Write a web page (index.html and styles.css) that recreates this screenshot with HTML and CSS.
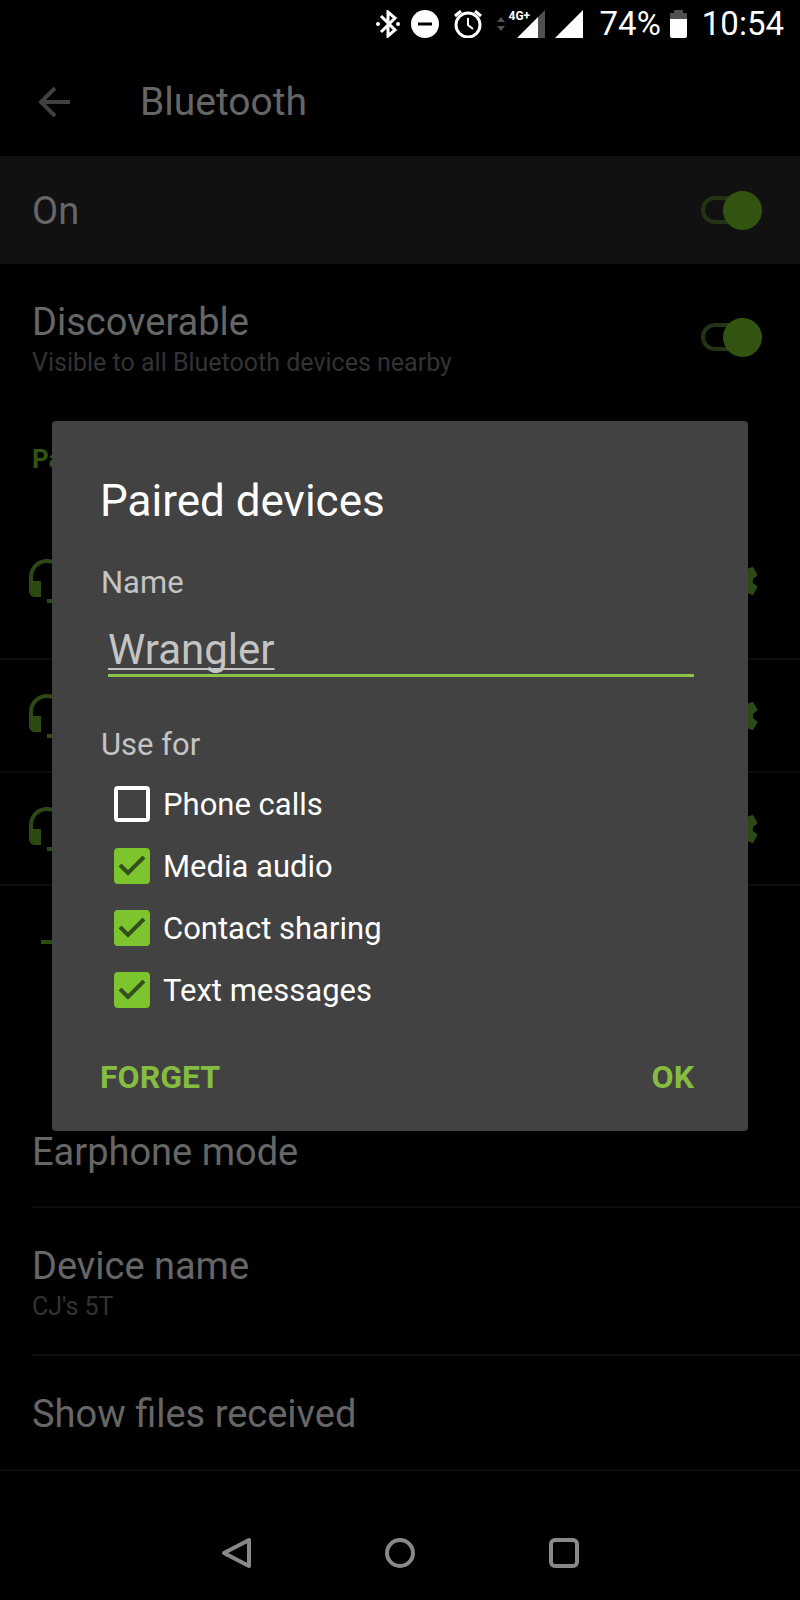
FILE: index.html
```html
<!DOCTYPE html>
<html lang="en">
<head>
    <meta charset="UTF-8">
    <meta name="viewport" content="width=device-width, initial-scale=1.0">
    <title>Bluetooth</title>
    <link rel="stylesheet" href="styles.css">
</head>
<body>
    <svg class="sprite" aria-hidden="true">
        <symbol id="headset" viewBox="0 0 24 24">
            <path d="M12 1c-4.97 0-9 4.03-9 9v7c0 1.66 1.34 3 3 3h3v-8H5v-2c0-3.87 3.13-7 7-7s7 3.13 7 7v2h-4v8h4v1h-7v2h6c1.66 0 3-1.34 3-3V10c0-4.97-4.03-9-9-9z"/>
        </symbol>
        <symbol id="gear" viewBox="0 0 24 24">
            <path d="M19.43 12.98c.04-.32.07-.64.07-.98s-.03-.66-.07-.98l2.11-1.65c.19-.15.24-.42.12-.64l-2-3.46c-.12-.22-.39-.3-.61-.22l-2.49 1c-.52-.4-1.08-.73-1.69-.98l-.38-2.65C14.46 2.18 14.25 2 14 2h-4c-.25 0-.46.18-.49.42l-.38 2.65c-.61.25-1.17.59-1.69.98l-2.49-1c-.23-.09-.49 0-.61.22l-2 3.46c-.13.22-.07.49.12.64l2.11 1.65c-.04.32-.07.65-.07.98s.03.66.07.98l-2.11 1.65c-.19.15-.24.42-.12.64l2 3.46c.12.22.39.3.61.22l2.49-1c.52.4 1.08.73 1.69.98l.38 2.65c.03.24.24.42.49.42h4c.25 0 .46-.18.49-.42l.38-2.65c.61-.25 1.17-.59 1.69-.98l2.49 1c.23.09.49 0 .61-.22l2-3.46c.12-.22.07-.49-.12-.64l-2.11-1.65zM12 15.5c-1.93 0-3.5-1.57-3.5-3.5s1.57-3.5 3.5-3.5 3.5 1.57 3.5 3.5-1.57 3.5-3.5 3.5z"/>
        </symbol>
    </svg>

    <div class="status-bar">
        <svg class="status-icon bluetooth" width="24" height="28" viewBox="0 0 24 28">
            <path d="M5 6l14 14-7 6V2l7 6L5 22" fill="none" stroke="#fff" stroke-width="3"/>
            <circle cx="2" cy="14" r="2"/>
            <circle cx="22" cy="14" r="2"/>
        </svg>
        <svg class="status-icon" width="28" height="28" viewBox="0 0 28 28">
            <circle cx="14" cy="14" r="14"/>
            <path d="M7 14h14" stroke="#000" stroke-width="3"/>
        </svg>
        <svg class="status-icon" width="28" height="28" viewBox="0 0 28 28">
            <g fill="none" stroke="#fff" stroke-width="3">
                <circle cx="14" cy="15" r="12"/>
                <path d="M14 8v7l5 4" stroke-width="2"/>
                <path d="M1 6l6-5M27 6l-6-5"/>
            </g>
        </svg>
        <div class="mobile">
            <svg class="data-arrows" width="8" height="14" viewBox="0 0 8 14">
                <path d="M0 5l4-5 4 5zM0 9l4 5 4-5z"/>
            </svg>
            <span class="network">4G+</span>
            <svg class="status-icon" width="28" height="28" viewBox="0 0 28 28">
                <path d="M28 0v28h-7V7z" fill="#505050"/>
                <path d="M21 7v21H0z"/>
            </svg>
        </div>
        <svg class="status-icon signal" width="28" height="28" viewBox="0 0 28 28">
            <path d="M28 0v28H0z"/>
        </svg>
        <span class="battery-level">74%</span>
        <svg class="status-icon battery" width="17" height="28" viewBox="0 0 17 28">
            <path d="M0 9V3h4V0h9v3h4v6z" fill="#505050"/>
            <path d="M0 9h17v17a2 2 0 0 1-2 2H2a2 2 0 0 1-2-2z"/>
        </svg>
        <span class="clock">10:54</span>
    </div>

    <header class="app-bar">
        <button class="back" aria-label="Back">
            <svg width="32" height="30" viewBox="0 0 32 30">
                <path d="M32 15H3M17 1L3 15l14 14" fill="none" stroke="currentColor" stroke-width="4"/>
            </svg>
        </button>
        <h1>Bluetooth</h1>
    </header>

    <main>
        <label class="row switch-bar">
            <span class="row-title">On</span>
            <input type="checkbox" class="switch" checked>
        </label>
        <label class="row two-line plain">
            <span>
                <span class="row-title">Discoverable</span>
                <span class="row-summary">Visible to all Bluetooth devices nearby</span>
            </span>
            <input type="checkbox" class="switch" checked>
        </label>

        <h2>Paired devices</h2>
        <div class="device first">
            <svg class="device-icon"><use href="#headset"/></svg>
            <svg class="device-icon"><use href="#gear"/></svg>
        </div>
        <div class="device">
            <svg class="device-icon"><use href="#headset"/></svg>
            <svg class="device-icon"><use href="#gear"/></svg>
        </div>
        <div class="device">
            <svg class="device-icon"><use href="#headset"/></svg>
            <svg class="device-icon"><use href="#gear"/></svg>
        </div>
        <div class="pair-new">
            <svg class="device-icon" viewBox="0 0 24 24"><path d="M19 13h-6v6h-2v-6H5v-2h6V5h2v6h6z"/></svg>
        </div>

        <div class="row">
            <span class="row-title">Earphone mode</span>
        </div>
        <div class="row two-line">
            <span>
                <span class="row-title">Device name</span>
                <span class="row-summary">CJ's 5T</span>
            </span>
        </div>
        <div class="row last">
            <span class="row-title">Show files received</span>
        </div>
    </main>

    <nav class="nav-bar">
        <button aria-label="Back">
            <svg width="32" height="32" viewBox="0 0 32 32"><path d="M29 3v26L4 16z"/></svg>
        </button>
        <button aria-label="Home">
            <svg width="32" height="32" viewBox="0 0 32 32"><circle cx="16" cy="16" r="13"/></svg>
        </button>
        <button aria-label="Recent apps">
            <svg width="32" height="32" viewBox="0 0 32 32"><rect x="3" y="3" width="26" height="26" rx="4"/></svg>
        </button>
    </nav>

    <div class="overlay">
        <form class="dialog" role="dialog" aria-labelledby="dialogTitle">
            <h2 id="dialogTitle" class="dialog-title">Paired devices</h2>
            <label for="deviceName" class="field-label">Name</label>
            <input type="text" id="deviceName" class="name-input" value="Wrangler" spellcheck="false">
            <fieldset>
                <legend class="field-label">Use for</legend>
                <div class="options">
                    <label class="option"><input type="checkbox">Phone calls</label>
                    <label class="option"><input type="checkbox" checked>Media audio</label>
                    <label class="option"><input type="checkbox" checked>Contact sharing</label>
                    <label class="option"><input type="checkbox" checked>Text messages</label>
                </div>
            </fieldset>
            <div class="actions">
                <button type="button">FORGET</button>
                <button type="button">OK</button>
            </div>
        </form>
    </div>
</body>
</html>
```
FILE: styles.css
```css
*,
*::before,
*::after {
    margin: 0;
    padding: 0;
    box-sizing: border-box;
    font-family: Roboto, "Noto Sans", sans-serif;
}

body {
    background: #000;
    color: #666;
    display: flex;
    flex-direction: column;
    min-height: 100vh;
}

svg {
    display: block;
    flex-shrink: 0;
}

button {
    background: none;
    border: none;
    cursor: pointer;
}

.sprite {
    position: absolute;
    width: 0;
    height: 0;
}

/* Status bar */
.status-bar {
    display: flex;
    align-items: center;
    justify-content: flex-end;
    gap: 15px;
    height: 48px;
    padding-right: 16px;
    color: #fff;
    font-size: 33px;
    line-height: 48px;
}

.status-icon {
    fill: #fff;
}

.bluetooth {
    margin-right: -4px;
}

.mobile {
    display: flex;
    align-items: center;
}

.data-arrows {
    fill: #505050;
    margin-right: 4px;
}

/* The label runs over the empty corner of the signal triangle */
.network {
    position: relative;
    align-self: flex-start;
    width: 8px;
    font-size: 12px;
    font-weight: bold;
    line-height: 12px;
}

.signal {
    margin: 0 2px 0 -5px;
}

.battery {
    margin-left: -6px;
}

/* App bar */
.app-bar {
    display: flex;
    align-items: center;
    height: 108px;
    padding-left: 38px;
    gap: 70px;
}

.back {
    color: #404040;
}

h1 {
    font-size: 39px;
    font-weight: normal;
}

/* Settings list */
main {
    flex: 1;
}

.row {
    display: flex;
    align-items: center;
    justify-content: space-between;
    min-height: 113px;
    margin-left: 32px;
    padding-right: 38px;
    border-bottom: 2px solid #0c0c0c;
}

.switch-bar {
    min-height: 108px;
    margin-left: 0;
    padding-left: 32px;
    background: #111;
    border-bottom: none;
}

.two-line {
    min-height: 148px;
}

.plain {
    min-height: 146px;
    border-bottom: none;
}

.last {
    min-height: 115px;
    margin-left: 0;
    padding-left: 32px;
}

.row-title {
    display: block;
    padding-top: 2px;
    font-size: 38px;
    line-height: 50px;
}

.row-summary {
    display: block;
    padding-bottom: 2px;
    padding-top: 2px;
    color: #333;
    font-size: 25px;
    line-height: 28px;
}

.switch {
    appearance: none;
    display: grid;
    align-items: center;
    width: 61px;
    height: 39px;
}

.switch::before,
.switch::after {
    content: "";
    grid-area: 1 / 1;
}

.switch::before {
    width: 52px;
    height: 28px;
    border: 4px solid #233315;
    border-radius: 14px;
}

.switch::after {
    justify-self: end;
    width: 39px;
    height: 39px;
    border-radius: 50%;
    background: #325410;
}

main h2 {
    padding: 4px 32px 0;
    color: #325410;
    font-size: 26px;
    line-height: 90px;
}

.device {
    display: flex;
    align-items: center;
    justify-content: space-between;
    height: 113px;
    padding: 0 38px 0 23px;
    border-bottom: 2px solid #0c0c0c;
}

.device.first {
    height: 156px;
}

.device-icon {
    width: 48px;
    height: 48px;
    fill: #2d4a14;
}

.pair-new {
    display: flex;
    align-items: center;
    height: 112px;
    margin-bottom: 97px;
    padding-left: 31px;
}

/* Navigation bar */
.nav-bar {
    display: flex;
    align-items: center;
    justify-content: center;
    gap: 132px;
    height: 96px;
    padding-top: 2px;
}

.nav-bar svg {
    fill: none;
    stroke: #888;
    stroke-width: 4;
    stroke-linejoin: round;
}

/* Dialog */
.overlay {
    position: fixed;
    inset: 48px 0 96px;
    display: flex;
    align-items: center;
    padding: 0 52px;
}

.dialog {
    width: 100%;
    padding: 50px 54px 24px 48px;
    border-radius: 4px;
    background: #424242;
    color: #fff;
}

.dialog-title {
    font-size: 44px;
    font-weight: normal;
    line-height: 60px;
    margin-bottom: 32px;
}

.field-label {
    display: block;
    color: #c4c4c4;
    font-size: 31px;
    line-height: 40px;
    padding-left: 1px;
}

.name-input {
    display: block;
    width: calc(100% - 8px);
    height: 60px;
    margin: 14px 0 48px 8px;
    padding-top: 8px;
    border: none;
    border-bottom: 3px solid #8bc34a;
    outline: none;
    background: none;
    color: #c4c4c4;
    font-size: 42px;
    text-decoration: underline 2px;
    text-decoration-skip-ink: none;
    text-underline-offset: 4px;
}

fieldset {
    border: none;
}

.options {
    padding-top: 8px;
}

.option {
    display: flex;
    align-items: center;
    gap: 13px;
    height: 62px;
    padding-left: 14px;
    font-size: 31px;
}

.option input {
    appearance: none;
    width: 36px;
    height: 36px;
    border: 4px solid #fff;
    border-radius: 4px;
}

.option input:checked {
    border: none;
    background: #7dc52e url("data:image/svg+xml,%3Csvg xmlns='http://www.w3.org/2000/svg' viewBox='0 0 36 36'%3E%3Cpath d='M6 17l8 8L30 9' fill='none' stroke='%23354f1c' stroke-width='4'/%3E%3C/svg%3E");
}

.actions {
    display: flex;
    justify-content: space-between;
    margin-top: 26px;
}

.actions button {
    color: #84bd40;
    font-size: 32px;
    font-weight: bold;
    line-height: 60px;
}
```
